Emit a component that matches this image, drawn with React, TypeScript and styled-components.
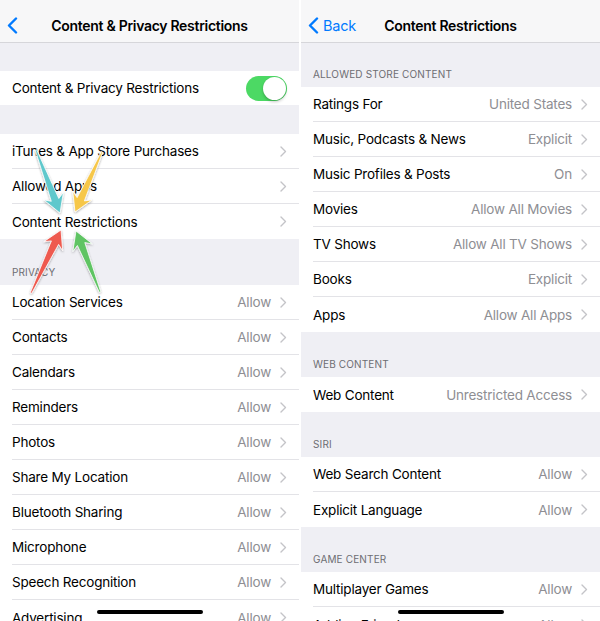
import styled, { createGlobalStyle } from 'styled-components';

const GlobalStyle = createGlobalStyle`
  html, body {
    margin: 0;
    padding: 0;
    background: #ffffff;
  }
  body {
    font-family: Inter, "Noto Sans", "Liberation Sans", sans-serif;
    -webkit-font-smoothing: antialiased;
  }
`;

const COLOR = {
  GROUPED_BG: '#efeff4',
  NAV_BG: '#f7f7f8',
  NAV_BORDER: '#d6d6da',
  SEPARATOR: '#e3e3e7',
  TEXT: '#000000',
  TEXT_SECONDARY: '#8e8e93',
  SECTION_TEXT: '#6d6d72',
  CHEVRON: '#c4c4c8',
  BLUE: '#007aff',
  GREEN: '#4cd964',
};

const Screen = styled.div`
  display: flex;
  width: 600px;
  height: 621px;
  gap: 2px;
  background: #ffffff;
`;

const Panel = styled.div`
  position: relative;
  flex: 1;
  height: 621px;
  overflow: hidden;
  background: ${COLOR.GROUPED_BG};
  display: flex;
  flex-direction: column;
`;

const NavBar = styled.div`
  flex-shrink: 0;
  height: 42px;
  box-sizing: content-box;
  padding-top: 0;
  display: grid;
  grid-template-columns: 1fr auto 1fr;
  align-items: center;
  background: ${COLOR.NAV_BG};
  border-bottom: 1px solid ${COLOR.NAV_BORDER};

  & > * {
    margin-top: 8px;
  }
`;

const BackButton = styled.div`
  display: flex;
  align-items: center;
  gap: 4px;
  padding-left: 7px;
  color: ${COLOR.BLUE};
  font-size: 14.5px;
  letter-spacing: -0.2px;
`;

const NavTitle = styled.div`
  font-size: 14px;
  font-weight: 600;
  color: ${COLOR.TEXT};
  letter-spacing: -0.3px;
`;

const SectionHeader = styled.div<{ $height: number }>`
  flex-shrink: 0;
  height: ${({ $height }) => $height}px;
  display: flex;
  align-items: flex-end;
  padding: 0 12px 7px;
  box-sizing: border-box;
  font-size: 10px;
  line-height: 12px;
  color: ${COLOR.SECTION_TEXT};
  text-transform: uppercase;
  letter-spacing: 0.15px;
`;

const Group = styled.div`
  flex-shrink: 0;
  background: #ffffff;
`;

const Row = styled.div<{ $height?: number }>`
  display: flex;
  height: ${({ $height }) => $height ?? 35}px;
  padding-left: 12px;

  &:last-child > div {
    border-bottom: none;
  }
`;

const RowBody = styled.div`
  flex: 1;
  display: flex;
  align-items: center;
  gap: 9px;
  padding-right: 12px;
  border-bottom: 1px solid ${COLOR.SEPARATOR};
`;

const Label = styled.span`
  flex: 1;
  font-size: 13.5px;
  letter-spacing: -0.2px;
  color: ${COLOR.TEXT};
  white-space: nowrap;
`;

const Value = styled.span`
  font-size: 13.5px;
  letter-spacing: -0.2px;
  color: ${COLOR.TEXT_SECONDARY};
  white-space: nowrap;
`;

const Toggle = styled.div<{ $on: boolean }>`
  position: relative;
  width: 41px;
  height: 25px;
  border-radius: 13px;
  background: ${({ $on }) => ($on ? COLOR.GREEN : '#e5e5ea')};

  &::after {
    content: '';
    position: absolute;
    top: 1px;
    left: ${({ $on }) => ($on ? '17px' : '1px')};
    width: 23px;
    height: 23px;
    border-radius: 50%;
    background: #ffffff;
    box-shadow: 0 2px 3px rgba(0, 0, 0, 0.2), 0 0 1px rgba(0, 0, 0, 0.15);
  }
`;

const HomeIndicator = styled.div`
  position: absolute;
  left: 50%;
  bottom: 7px;
  width: 106px;
  height: 4px;
  margin-left: -53px;
  border-radius: 2px;
  background: #000000;
`;

const ArrowLayer = styled.svg`
  position: absolute;
  left: 0;
  top: 0;
  pointer-events: none;
`;

const Chevron = () => (
  <svg width="7" height="11" viewBox="0 0 7 11">
    <path
      d="M1 1 L5.5 5.5 L1 10"
      fill="none"
      stroke={COLOR.CHEVRON}
      strokeWidth="1.4"
      strokeLinecap="round"
      strokeLinejoin="round"
    />
  </svg>
);

const BackChevron = () => (
  <svg width="11" height="17" viewBox="0 0 11 17">
    <path
      d="M9 1.5 L2 8.5 L9 15.5"
      fill="none"
      stroke={COLOR.BLUE}
      strokeWidth="2.4"
      strokeLinecap="round"
      strokeLinejoin="round"
    />
  </svg>
);

type Item = { label: string; value?: string };

const SettingsGroup = ({ items }: { items: Item[] }) => (
  <Group>
    {items.map(({ label, value }) => (
      <Row key={label}>
        <RowBody>
          <Label>{label}</Label>
          {value && <Value>{value}</Value>}
          <Chevron />
        </RowBody>
      </Row>
    ))}
  </Group>
);

type Pt = [number, number];

// tapered annotation arrow: thin tail, wide head at the tip
const arrowPoints = (tail: Pt, tip: Pt, headLen = 18, headW = 21, shaftW = 8) => {
  const dx = tip[0] - tail[0];
  const dy = tip[1] - tail[1];
  const len = Math.hypot(dx, dy);
  const ux = dx / len;
  const uy = dy / len;
  const nx = -uy;
  const ny = ux;
  const bx = tip[0] - ux * headLen;
  const by = tip[1] - uy * headLen;
  const nb = tip[0] - ux * (headLen - 4);
  const nby = tip[1] - uy * (headLen - 4);
  const pts: Pt[] = [
    [tail[0] + nx * 0.8, tail[1] + ny * 0.8],
    [nb + (nx * shaftW) / 2, nby + (ny * shaftW) / 2],
    [bx + (nx * headW) / 2, by + (ny * headW) / 2],
    tip,
    [bx - (nx * headW) / 2, by - (ny * headW) / 2],
    [nb - (nx * shaftW) / 2, nby - (ny * shaftW) / 2],
    [tail[0] - nx * 0.8, tail[1] - ny * 0.8],
  ];
  return pts.map((p) => p.map((v) => v.toFixed(1)).join(',')).join(' ');
};

const ARROWS: { tail: Pt; tip: Pt; color: string }[] = [
  { tail: [36, 150], tip: [60, 213], color: '#5ec8cc' },
  { tail: [102, 152], tip: [75, 212], color: '#f6c749' },
  { tail: [31, 293], tip: [61, 230], color: '#ee5a4f' },
  { tail: [100, 292], tip: [76, 231], color: '#5fc463' },
];

const privacyItems: Item[] = [
  'Location Services',
  'Contacts',
  'Calendars',
  'Reminders',
  'Photos',
  'Share My Location',
  'Bluetooth Sharing',
  'Microphone',
  'Speech Recognition',
  'Advertising',
].map((label) => ({ label, value: 'Allow' }));

const storeItems: Item[] = [
  { label: 'Ratings For', value: 'United States' },
  { label: 'Music, Podcasts & News', value: 'Explicit' },
  { label: 'Music Profiles & Posts', value: 'On' },
  { label: 'Movies', value: 'Allow All Movies' },
  { label: 'TV Shows', value: 'Allow All TV Shows' },
  { label: 'Books', value: 'Explicit' },
  { label: 'Apps', value: 'Allow All Apps' },
];

export default function App() {
  return (
    <>
      <GlobalStyle />
      <Screen>
        <Panel>
          <NavBar>
            <BackButton>
              <BackChevron />
            </BackButton>
            <NavTitle>Content &amp; Privacy Restrictions</NavTitle>
            <div />
          </NavBar>
          <SectionHeader $height={28} />
          <Group>
            <Row $height={34}>
              <RowBody>
                <Label>Content &amp; Privacy Restrictions</Label>
                <Toggle $on />
              </RowBody>
            </Row>
          </Group>
          <SectionHeader $height={29} />
          <SettingsGroup
            items={[
              { label: 'iTunes & App Store Purchases' },
              { label: 'Allowed Apps' },
              { label: 'Content Restrictions' },
            ]}
          />
          <SectionHeader $height={46}>Privacy</SectionHeader>
          <SettingsGroup items={privacyItems} />
          <ArrowLayer width="299" height="621" viewBox="0 0 299 621">
            <defs>
              <filter id="arrowShadow" x="-20%" y="-20%" width="140%" height="140%">
                <feDropShadow dx="0" dy="1" stdDeviation="0.8" floodColor="#000" floodOpacity="0.35" />
              </filter>
            </defs>
            {ARROWS.map(({ tail, tip, color }) => (
              <polygon
                key={color}
                points={arrowPoints(tail, tip)}
                fill={color}
                stroke="#ffffff"
                strokeWidth="0.8"
                strokeLinejoin="round"
                filter="url(#arrowShadow)"
              />
            ))}
          </ArrowLayer>
          <HomeIndicator />
        </Panel>

        <Panel>
          <NavBar>
            <BackButton>
              <BackChevron />
              <span>Back</span>
            </BackButton>
            <NavTitle>Content Restrictions</NavTitle>
            <div />
          </NavBar>
          <SectionHeader $height={44}>Allowed Store Content</SectionHeader>
          <SettingsGroup items={storeItems} />
          <SectionHeader $height={45}>Web Content</SectionHeader>
          <SettingsGroup items={[{ label: 'Web Content', value: 'Unrestricted Access' }]} />
          <SectionHeader $height={45}>Siri</SectionHeader>
          <SettingsGroup
            items={[
              { label: 'Web Search Content', value: 'Allow' },
              { label: 'Explicit Language', value: 'Allow' },
            ]}
          />
          <SectionHeader $height={45}>Game Center</SectionHeader>
          <SettingsGroup
            items={[
              { label: 'Multiplayer Games', value: 'Allow' },
              { label: 'Adding Friends', value: 'Allow' },
            ]}
          />
          <HomeIndicator />
        </Panel>
      </Screen>
    </>
  );
}
